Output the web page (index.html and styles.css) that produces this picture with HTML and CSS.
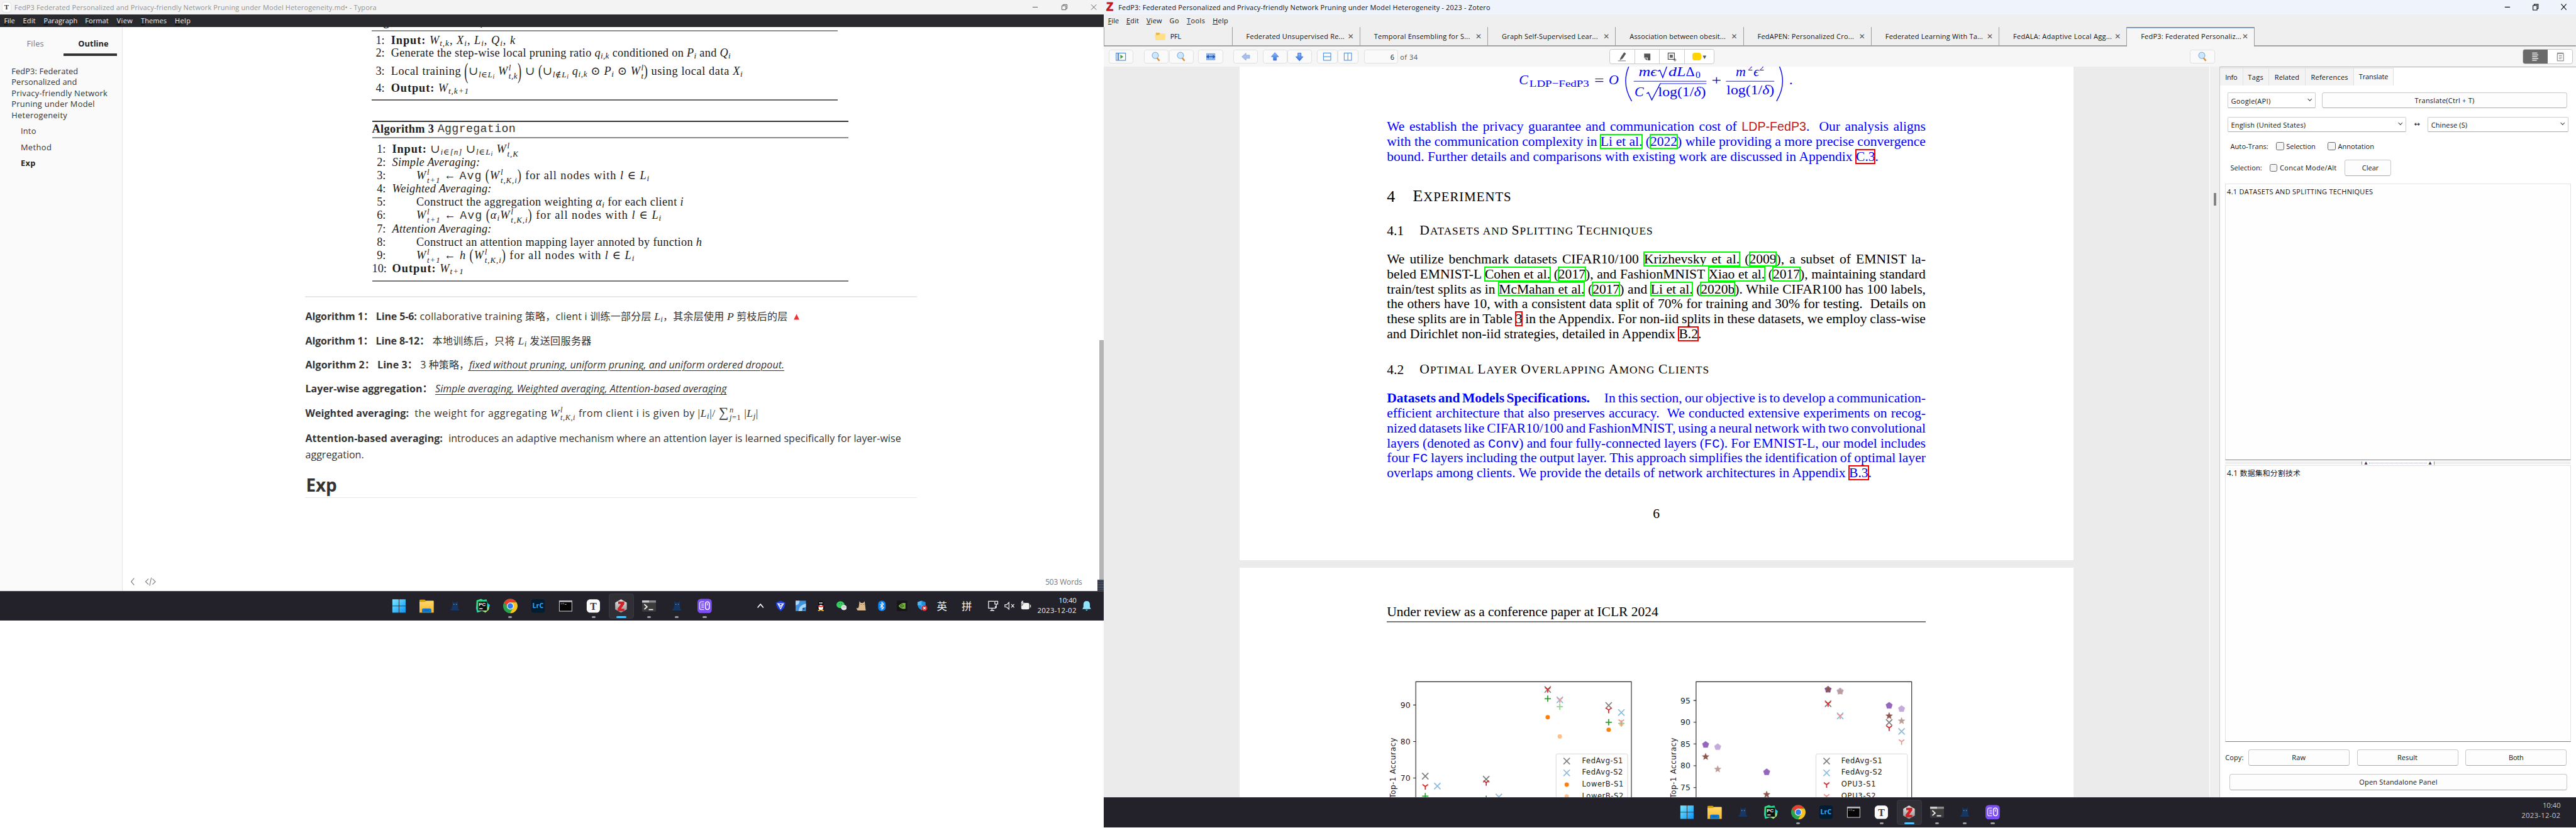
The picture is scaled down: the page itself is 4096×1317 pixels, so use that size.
FILE: index.html
```html
<!DOCTYPE html>
<html lang="en">
<head>
<meta charset="utf-8">
<title>Desktop</title>
<link rel="stylesheet" href="styles.css">
</head>
<body>
<svg width="0" height="0" class="defs">
  <defs>
    <linearGradient id="gw" x1="0" y1="0" x2="1" y2="1"><stop offset="0" stop-color="#7be8ff"/><stop offset="1" stop-color="#0a94f5"/></linearGradient>
    <linearGradient id="gf" x1="0" y1="0" x2="0" y2="1"><stop offset="0" stop-color="#ffd968"/><stop offset="1" stop-color="#f8b62c"/></linearGradient>
    <linearGradient id="gz" x1="0" y1="0" x2="0" y2="1"><stop offset="0" stop-color="#e8e8e8"/><stop offset="1" stop-color="#8d8d8d"/></linearGradient>
    <linearGradient id="gp" x1="0" y1="0" x2="1" y2="1"><stop offset="0" stop-color="#39e36f"/><stop offset=".5" stop-color="#1fd3a0"/><stop offset="1" stop-color="#f3f04b"/></linearGradient>
    <linearGradient id="ga" x1="0" y1="0" x2="0" y2="1"><stop offset="0" stop-color="#8fc0ff"/><stop offset="1" stop-color="#2f6de0"/></linearGradient>
  </defs>
  <symbol id="i-win" viewBox="0 0 26 26"><path d="M1 1h11.5v11.5H1zM13.5 1H25v11.5H13.5zM1 13.5h11.5V25H1zM13.5 13.5H25V25H13.5z" fill="url(#gw)"/></symbol>
  <symbol id="i-folder" viewBox="0 0 26 26"><path d="M0 3q0-1.500 1.500-1.500h8L12 4v4H0z" fill="#d99a0b"/><path d="M0 5.500h10l2-2h12.500q1.500 0 1.500 1.500V25H0z" fill="url(#gf)"/><path d="M4.500 25v-5q0-2.500 2.500-2.500h12q2.500 0 2.500 2.500v5z" fill="#0f78d0"/><path d="M9 20.500h8" stroke="#0a5ba6" stroke-width="1.200"/></symbol>
  <symbol id="i-cat" viewBox="0 0 26 26"><path d="M8 4l3 3h4l3-3 .5 8q-1 2 .5 5l2 4H7q-3 0-3-2 2 0 3-2l1.500-5z" fill="#173763"/><circle cx="11" cy="10" r=".8" fill="#8aa6c9"/><circle cx="15.500" cy="10" r=".8" fill="#8aa6c9"/></symbol>
  <symbol id="i-pc" viewBox="0 0 26 26"><path d="M2 3l8-3 4 2 6-1 2 7 4 3-2 9-6 5-6-3-9 3-2-8z" fill="url(#gp)"/><path d="M20 7l6 4-3 5z" fill="#16c8e8"/><path d="M5 5h16v16H5z" fill="#0b0f0b"/><text x="6" y="13.500" class="pc">PC</text><path d="M7 18h6" stroke="#fff" stroke-width="1.500"/></symbol>
  <symbol id="i-chrome" viewBox="0 0 26 26"><circle cx="13" cy="13" r="13" fill="#2ba24c"/><path d="M1.700 6.500A13 13 0 0 1 24.300 6.500H13L8 15z" fill="#e8402f"/><path d="M24.300 6.500A13 13 0 0 1 12.500 26L18.500 16 15 6.500z" fill="#fcc31e"/><circle cx="13" cy="13" r="6.300" fill="#fff"/><circle cx="13" cy="13" r="5" fill="#2f7cee"/></symbol>
  <symbol id="i-lrc" viewBox="0 0 26 26"><rect x="1" y="1" width="24" height="24" rx="4" fill="#001e33"/><text x="3" y="17" class="lrc" textLength="20" lengthAdjust="spacingAndGlyphs">LrC</text></symbol>
  <symbol id="i-cmd" viewBox="0 0 26 26"><rect x="1" y="3" width="24" height="20" fill="#b9bcc0"/><rect x="2.300" y="6" width="21.400" height="15.700" fill="#050505"/><path d="M4 9h2m1.500-.5v1m1.500-1.500l1 2m1.500 0h3" stroke="#ddd" stroke-width="1"/></symbol>
  <symbol id="i-typora" viewBox="0 0 26 26"><rect x="1" y="1" width="24" height="24" rx="6" fill="#fafafa"/><text x="13" y="19.500" text-anchor="middle" class="ty">T</text></symbol>
  <symbol id="i-zot" viewBox="0 0 26 26"><path d="M13 1l10.500 6v12L13 25 2.500 19V7z" fill="url(#gz)"/><path d="M8 5h11v4.500L13 18h6v4H7v-4.500L13 9.500H8z" fill="#d02026"/></symbol>
  <symbol id="i-term" viewBox="0 0 26 26"><rect x="0" y="3" width="26" height="20" rx="1.500" fill="#3b3b3b"/><path d="M0 3h13v4H0z" fill="#c9c9c9"/><path d="M13 3h13v4H13z" fill="#8a8a8a"/><path d="M4 10l5 4.500L4 19M12 19.500h8" stroke="#f2f2f2" stroke-width="2" fill="none"/></symbol>
  <symbol id="i-purple" viewBox="0 0 26 26"><rect width="26" height="26" rx="6" fill="#7c4ff5"/><path d="M12 5.500H7Q4 5.500 4 8.500v8q0 3 3 3h5M7 9.500h5m-5 3h5m-5 3h5" stroke="#dcd0ff" stroke-width="1.700" fill="none"/><rect x="14.500" y="5.500" width="7" height="14" rx="3.500" fill="none" stroke="#fff" stroke-width="1.700"/><path d="M18 8v4" stroke="#fff" stroke-width="1.300"/></symbol>
  <symbol id="i-lens" viewBox="0 0 20 20"><path d="M11.500 12l5 6" stroke="#d9902f" stroke-width="3"/><circle cx="8.500" cy="7.500" r="6" fill="#cfe6fb" stroke="#86b4e4" stroke-width="1.500"/></symbol>
</svg>

<div class="desktop">
  <section class="screen-left">
    <div class="typora">
      <header class="ty-title">
        <span class="ty-logo">T</span>
        <span data-fit="630">FedP3 Federated Personalized and Privacy-friendly Network Pruning under Model Heterogeneity.md• - Typora</span>
        <svg class="winctl" viewBox="0 0 126 25"><path d="M2 12.500h9M53 10h7v7h-7zM55 10V8h7v7h-2M104 8l9 9M113 8l-9 9" fill="none"/></svg>
      </header>
      <nav class="ty-menu">
        <span data-fit="19"><u>F</u>ile</span><span data-fit="22"><u>E</u>dit</span><span data-fit="59"><u>P</u>aragraph</span><span data-fit="41">F<u>o</u>rmat</span><span data-fit="28"><u>V</u>iew</span><span data-fit="45"><u>T</u>hemes</span><span data-fit="28"><u>H</u>elp</span>
      </nav>
      <div class="ty-main">
        <aside class="sidebar">
          <div class="side-tabs"><span class="st"><span data-fit="30">Files</span></span><span class="st on"><span data-fit="53">Outline</span></span></div>
          <div class="outline">
            <div class="o1"><span data-fit="116">FedP3: Federated</span><br><span data-fit="114">Personalized and</span><br><span data-fit="167">Privacy-friendly Network</span><br><span data-fit="145">Pruning under Model</span><br><span data-fit="97">Heterogeneity</span></div>
            <div class="o2"><span data-fit="27">Into</span></div>
            <div class="o2"><span data-fit="54">Method</span></div>
            <div class="o2 cur"><span data-fit="26">Exp</span></div>
          </div>
        </aside>
        <div class="doc">
          <div class="alg alg-a">
            <div class="cut"><div class="alg-t"><b data-fit="108">Algorithm 2</b><tt data-fit="136">LocalUpdate</tt></div></div>
            <div class="rows">
              <div class="r"><span class="n">1:</span><span data-fit="217"><b>Input:</b> <i>W<sub>t,k</sub></i>, <i>X<sub>i</sub></i>, <i>L<sub>i</sub></i>, <i>Q<sub>i</sub></i>, <i>k</i></span></div>
              <div class="r r-gap"><span class="n">2:</span><span data-fit="591">Generate the step-wise local pruning ratio <i>q<sub>i,k</sub></i> conditioned on <i>P<sub>i</sub></i> and <i>Q<sub>i</sub></i></span></div>
              <div class="r r-mid"><span class="n">3:</span><span data-fit="612">Local training <span class="big xl">(</span>∪<i><sub>l∈L<small>i</small></sub> W<span class="ss"><span>l</span><span>t,k</span></span></i><span class="big xl">)</span> ∪ <span class="big">(</span>∪<i><sub>l∉L<small>i</small></sub> q<sub>i,k</sub></i> ⊙ <i>P<sub>i</sub></i> ⊙ <i>W<span class="ss"><span>l</span><span>t</span></span></i><span class="big">)</span> using local data <i>X<sub>i</sub></i></span></div>
              <div class="r"><span class="n">4:</span><span data-fit="136"><b>Output:</b> <i>W<sub>t,k+1</sub></i></span></div>
            </div>
          </div>
          <div class="alg alg-b">
            <div class="alg-t"><b data-fit="108">Algorithm 3</b><tt data-fit="136">Aggregation</tt></div>
            <div class="rows">
              <div class="r"><span class="n">1:</span><span data-fit="220"><b>Input:</b> ∪<i><sub>i∈[n]</sub></i> ∪<i><sub>l∈L<small>i</small></sub></i> <i>W<span class="ss"><span>l</span><span>t,K</span></span></i></span></div>
              <div class="r"><span class="n">2:</span><i data-fit="153">Simple Averaging:</i></div>
              <div class="r in"><span class="n">3:</span><span data-fit="406"><i>W<span class="ss"><span>l</span><span>t+1</span></span></i> ← <tt>Avg</tt> <span class="big">(</span><i>W<span class="ss"><span>l</span><span>t,K,i</span></span></i><span class="big">)</span> for all nodes with <i>l</i> ∈ <i>L<sub>i</sub></i></span></div>
              <div class="r"><span class="n">4:</span><i data-fit="173">Weighted Averaging:</i></div>
              <div class="r in"><span class="n">5:</span><span data-fit="465">Construct the aggregation weighting <i>α<sub>i</sub></i> for each client <i>i</i></span></div>
              <div class="r in"><span class="n">6:</span><span data-fit="427"><i>W<span class="ss"><span>l</span><span>t+1</span></span></i> ← <tt>Avg</tt> <span class="big">(</span><i>α<sub>i</sub>W<span class="ss"><span>l</span><span>t,K,i</span></span></i><span class="big">)</span> for all nodes with <i>l</i> ∈ <i>L<sub>i</sub></i></span></div>
              <div class="r"><span class="n">7:</span><i data-fit="173">Attention Averaging:</i></div>
              <div class="r in"><span class="n">8:</span><span data-fit="497">Construct an attention mapping layer annoted by function <i>h</i></span></div>
              <div class="r in"><span class="n">9:</span><span data-fit="380"><i>W<span class="ss"><span>l</span><span>t+1</span></span></i> ← <i>h</i> <span class="big">(</span><i>W<span class="ss"><span>l</span><span>t,K,i</span></span></i><span class="big">)</span> for all nodes with <i>l</i> ∈ <i>L<sub>i</sub></i></span></div>
              <div class="r"><span class="n">10:</span><span data-fit="125"><b>Output:</b> <i>W<sub>t+1</sub></i></span></div>
            </div>
          </div>
          <hr>
          <p><b data-fit="194">Algorithm 1： Line 5-6:</b><span data-fit="640">collaborative training 策略，client i 训练一部分层 <i class="m">L<sub>i</sub></i>，其余层使用 <i class="m">P</i> 剪枝后的层</span><svg class="tri" viewBox="0 0 10 10"><path d="M5 0l4.800 9.800H.2z" fill="#f03030"/></svg></p>
          <p><b data-fit="216">Algorithm 1： Line 8-12：</b><span data-fit="277">本地训练后，只将 <i class="m">L<sub>i</sub></i> 发送回服务器</span></p>
          <p><b data-fit="195">Algorithm 2： Line 3：</b><span data-fit="85">3 种策略，</span><em data-fit="548">fixed without pruning, uniform pruning, and uniform ordered dropout.</em></p>
          <p><b data-fit="221">Layer-wise aggregation：</b><em data-fit="507">Simple averaging, Weighted averaging, Attention-based averaging</em></p>
          <p><b class="w" data-fit="180">Weighted averaging:</b><span data-fit="598">the weight for aggregating <i class="m">W<span class="ss"><span>l</span><span>t,K,i</span></span></i> from client i is given by <span class="m">|<i>L<sub>i</sub></i>|/ <span class="sum">∑</span><span class="ss"><span><i>n</i></span><span><i>j</i>=1</span></span> |<i>L<sub>j</sub></i>|</span></span></p>
          <p class="last"><b class="w" data-fit="239">Attention-based averaging:</b><span data-fit="787">introduces an adaptive mechanism where an attention layer is learned specifically for layer-wise</span><br><span data-fit="102">aggregation.</span></p>
          <h2><span data-fit="54">Exp</span></h2>
          <footer class="ty-status">
            <svg viewBox="0 0 60 20"><path d="M9 4l-5 6 5 6M34 5l-5 5 5 5M41 5l5 5-5 5M39 3l-3 14" fill="none" stroke="#777" stroke-width="1.200"/></svg>
            <span data-fit="64">503 Words</span>
          </footer>
        </div>
        <div class="ty-scroll"><div class="thumb"></div><div class="edge"></div></div>
      </div>
    </div>
    <div class="taskbar">
      <div class="apps">
        <span><svg><use href="#i-win"/></svg></span><span><svg><use href="#i-folder"/></svg></span><span><svg><use href="#i-cat"/></svg></span><span><svg><use href="#i-pc"/></svg></span><span class="run"><svg><use href="#i-chrome"/></svg></span><span><svg><use href="#i-lrc"/></svg></span><span><svg><use href="#i-cmd"/></svg></span><span class="run"><svg><use href="#i-typora"/></svg></span><span class="run act"><svg><use href="#i-zot"/></svg></span><span class="run"><svg><use href="#i-term"/></svg></span><span class="run"><svg><use href="#i-cat"/></svg></span><span class="run"><svg><use href="#i-purple"/></svg></span>
      </div>
      <div class="tray">
        <svg viewBox="0 0 18 18"><path d="M4 12l5-6 5 6" stroke="#fff" stroke-width="1.800" fill="none"/></svg>
        <svg viewBox="0 0 18 18"><path d="M9 0l8 3q1 9-8 15Q0 12 1 3z" fill="#1f3fe0"/><path d="M4 5h10L9 14zM6 6l3 4 3-4" stroke="#fff" stroke-width="1.300" fill="none"/></svg>
        <svg viewBox="0 0 18 18"><rect width="18" height="18" fill="#3f93dc"/><path d="M0 0h7Q7 7 0 8zM18 5Q6 8 5 18h6q1-6 7-7z" fill="#a9d6f7"/><circle cx="14" cy="14" r="2" fill="#154b94"/></svg>
        <svg viewBox="0 0 18 18"><ellipse cx="9" cy="6" rx="5" ry="6" fill="#111"/><ellipse cx="9" cy="12" rx="6.500" ry="5" fill="#111"/><ellipse cx="9" cy="12" rx="4" ry="4.500" fill="#fff"/><path d="M4 8q5 3 10 0v2q-5 3-10 0z" fill="#e32222"/><path d="M4 17h4m2 0h4" stroke="#f5a500" stroke-width="2"/><circle cx="7.500" cy="4" r="1.200" fill="#fff"/><circle cx="10.500" cy="4" r="1.200" fill="#fff"/></svg>
        <svg viewBox="0 0 18 18"><ellipse cx="7" cy="7" rx="7" ry="6" fill="#2fd35d"/><ellipse cx="13" cy="12" rx="5" ry="4.500" fill="#e6e6e6"/><path d="M4.500 5.500h1M8.500 5.500h1M11 11h1M14 11h1" stroke="#333" stroke-width="1.200"/></svg>
        <svg viewBox="0 0 18 18"><path d="M5 1l2.500 3h4L14 1l2 16H5Q0 18 0 12q3 3 4-2z" fill="#dcb98c"/><path d="M8 6v1m4-1v1" stroke="#333"/></svg>
        <svg viewBox="0 0 18 18"><rect x="2.500" width="13" height="18" rx="6" fill="#0a84f0"/><path d="M6 6l6 6-3 3V3l3 3-6 6" stroke="#fff" stroke-width="1.200" fill="none"/></svg>
        <svg viewBox="0 0 18 18"><rect width="18" height="18" fill="#151515"/><path d="M3 9q5-6 12-5v10q-8 1-12-5z" fill="#76b83a"/><path d="M6 9q3-4 6 0-3 4-6 0z" fill="#76b83a" stroke="#151515"/></svg>
        <svg viewBox="0 0 18 18"><path d="M8 0l7 2.500q1 10-7 14-8-4-7-14z" fill="#1c8fe0"/><path d="M8 0v8H1V2.500zM8 8h7q-1 6-7 8.500z" fill="#4cb9f2"/><circle cx="13" cy="13" r="5" fill="#d92b33"/><path d="M11 11l4 4m0-4l-4 4" stroke="#fff" stroke-width="1.300"/></svg>
        <span class="ime">英</span><span class="ime b">拼</span>
        <svg class="t1" viewBox="0 0 20 18"><path d="M12 1H2v12h12V9M5 17h7M8 13v4M13 1h5v5h-5zM15.500 6v6h-2" fill="none" stroke="#f2f2f2" stroke-width="1.400"/></svg>
        <svg class="t2" viewBox="0 0 18 18"><path d="M1 7h3l4-4v12l-4-4H1zM12 6l5 6m0-6l-5 6" fill="none" stroke="#f2f2f2" stroke-width="1.300"/></svg>
        <svg class="t3" viewBox="0 0 20 18"><rect x="2" y="4" width="14" height="11" rx="2.500" fill="#f2f2f2"/><path d="M17 7h2v5h-2zM3 0l-2 5h3L3 9l5-6H5l1-3z" fill="#f2f2f2" stroke="#232129" stroke-width=".6"/></svg>
        <div class="clock"><span data-fit="31">10:40</span><span data-fit="68">2023-12-02</span></div>
        <svg class="bell" viewBox="0 0 16 18"><path d="M8 0q6 0 6 7v4l2 4H0l2-4V7q0-7 6-7zM5.500 16h5l-2.500 2z" fill="#8fe3ff"/></svg>
      </div>
    </div>
  </section>

  <section class="screen-right">
    <header class="z-title"><span class="z-logo">Z</span><span data-fit="647">FedP3: Federated Personalized and Privacy-friendly Network Pruning under Model Heterogeneity - 2023 - Zotero</span>
      <svg class="winctl dark" viewBox="0 0 126 25"><path d="M2 12.500h9M51 9.500h7v8h-7zM53 9V7.500h7V15h-2M100 7l9 10M109 7l-9 10" fill="none"/></svg>
    </header>
    <nav class="z-menu"><span data-fit="19"><u>F</u>ile</span><span data-fit="22"><u>E</u>dit</span><span data-fit="27"><u>V</u>iew</span><span data-fit="17">Go</span><span data-fit="32"><u>T</u>ools</span><span data-fit="27"><u>H</u>elp</span></nav>
    <div class="z-tabs">
      <div class="tab first"><svg viewBox="0 0 19 14"><path d="M2 0h6l2 2h7v12H2z" fill="#e9b949"/><path d="M0 4h7l2-2h10l-1 12H2z" fill="#ffdf87"/></svg><span data-fit="19">PFL</span></div>
      <div class="tab"><span data-fit="171">Federated Unsupervised Re...</span><i class="x">✕</i></div>
      <div class="tab"><span data-fit="167">Temporal Ensembling for S...</span><i class="x">✕</i></div>
      <div class="tab"><span data-fit="167">Graph Self-Supervised Lear...</span><i class="x">✕</i></div>
      <div class="tab"><span data-fit="167">Association between obesit...</span><i class="x">✕</i></div>
      <div class="tab"><span data-fit="168">FedAPEN: Personalized Cro...</span><i class="x">✕</i></div>
      <div class="tab"><span data-fit="170">Federated Learning With Ta...</span><i class="x">✕</i></div>
      <div class="tab"><span data-fit="172">FedALA: Adaptive Local Agg...</span><i class="x">✕</i></div>
      <div class="tab on"><span data-fit="175">FedP3: Federated Personaliz...</span><i class="x">✕</i></div>
    </div>
    <div class="z-bar">
      <span class="btn"><svg viewBox="0 0 20 20"><rect x="1" y="3" width="18" height="14" fill="#fff" stroke="#5b8fd0" stroke-width="1.500"/><path d="M5 3v14" stroke="#5b8fd0" stroke-width="3"/><path d="M9 6l6 4-6 4z" fill="#3fa53c"/></svg></span>
      <span class="btn g18"><svg><use href="#i-lens"/></svg></span>
      <span class="btn g1"><svg><use href="#i-lens"/></svg></span>
      <span class="btn g8"><svg viewBox="0 0 20 20"><rect x="2" y="4" width="16" height="12" fill="#8db9f0" stroke="#6d9bdb"/><path d="M1 10l5-4v3h8V6l5 4-5 4v-3H6v3z" fill="#2459b5"/></svg></span>
      <span class="btn g18"><svg viewBox="0 0 20 20"><path d="M2 10l8-7v4h7v6h-7v4z" fill="#a9c1ea" stroke="#8ba9dc"/></svg></span>
      <span class="btn g8"><svg viewBox="0 0 20 20"><path d="M10 2l7 8h-4v7H7v-7H3z" fill="url(#ga)" stroke="#4f7fd6"/></svg></span>
      <span class="btn"><svg viewBox="0 0 20 20"><path d="M10 18l7-8h-4V3H7v7H3z" fill="url(#ga)" stroke="#2c5fc4"/></svg></span>
      <span class="btn nar g8"><svg viewBox="0 0 20 20"><path d="M3 3h14v14H3zM3 10h14" fill="#fff" stroke="#5b9be0" stroke-width="1.500"/></svg></span>
      <span class="btn nar"><svg viewBox="0 0 20 20"><path d="M3 3h14v14H3zM10 3v14" fill="#fff" stroke="#5b9be0" stroke-width="1.500"/></svg></span>
      <span class="btn pg">6</span><span class="of" data-fit="31">of 34</span>
      <span class="grp">
        <span><svg viewBox="0 0 20 20"><path d="M14 2l3 2-6 9-3 2-2 1 2-5zM2 18h15" fill="#555" stroke="#555"/></svg></span>
        <span><svg viewBox="0 0 20 20"><path d="M4 4h12v13h-5v-5H4z" fill="#555"/><path d="M4 13h6v4z" fill="#555"/></svg></span>
        <span><svg viewBox="0 0 20 20"><path d="M3 3h12v12H3z" fill="none" stroke="#555" stroke-width="1.500"/><path d="M6 6h6v6H6z" fill="#666"/><path d="M16 13v6m-3-3h6" stroke="#555" stroke-width="1.300"/></svg></span>
        <span class="col"><i></i>▾</span>
      </span>
      <span class="btn find"><svg><use href="#i-lens"/></svg></span>
      <span class="seg"><span class="d"><svg viewBox="0 0 20 20"><path d="M4 3h10M4 6.500h12M4 10h10M4 13.500h12M4 17h9" stroke="#fff" stroke-width="1.500"/></svg></span><span><svg viewBox="0 0 20 20"><path d="M4 4h12v14H4z" fill="#fff" stroke="#777" stroke-width="1.200"/><path d="M4 2.800h12" stroke="#777" stroke-width="2" stroke-dasharray="1.500 1"/><path d="M7 8h6M7 11h6M7 14h5" stroke="#888" stroke-width="1.200"/></svg></span></span>
    </div>
    <div class="z-body">
      <div class="viewer">
        <article class="page p1">
          <svg class="formula" viewBox="2412 116 937 66">
            <g class="fm">
              <text x="2642" y="147" class="it">C</text><text x="2660" y="151.500" class="s" textLength="104" lengthAdjust="spacingAndGlyphs">LDP−FedP3</text>
              <text x="2773" y="148" textLength="17" lengthAdjust="spacingAndGlyphs">=</text><text x="2798" y="147" class="it" textLength="18">O</text>
              <path d="M2838 106q-21 35 0 70M3090 106q21 35 0 70" class="ln"/>
              <path d="M2841.500 141.500h126.500M3002 141.500h84M2888 145.500h80" class="hl"/>
              <text x="2850" y="132" class="it" textLength="32" lengthAdjust="spacingAndGlyphs">mϵ</text>
              <path d="M2884 124l3-2 5 13 10-27M2864 163l3-2 6 13 15-29" class="ln"/>
              <path d="M2902 108h17" class="hl"/>
              <text x="2902" y="132" class="it" textLength="30" lengthAdjust="spacingAndGlyphs">dL</text><text x="2932" y="132" textLength="17">Δ</text><text x="2949" y="135.500" class="s">0</text>
              <text x="2843" y="167" class="it" textLength="17">C</text><text x="2884" y="167" textLength="83" lengthAdjust="spacingAndGlyphs">log(1/<tspan class="it">δ</tspan>)</text>
              <text x="2977" y="148" textLength="17" lengthAdjust="spacingAndGlyphs">+</text>
              <text x="3019" y="132" class="it">m</text><text x="3040" y="123" class="s">2</text><text x="3050" y="132" class="it">ϵ</text><text x="3060" y="123" class="s">2</text>
              <text x="3003" y="164" textLength="83" lengthAdjust="spacingAndGlyphs">log(1/<tspan class="it">δ</tspan>)</text>
              <text x="3112" y="147">.</text>
            </g>
          </svg>
          <div class="para blue g26">
            <div class="line" data-by="word" data-fit="937">We establish the privacy guarantee and communication cost of <span class="ldp">LDP-FedP3</span>.&nbsp; Our analysis aligns</div>
            <div class="line" data-by="word" data-fit="937">with the communication complexity in <a class="c">Li et al.</a> (<a class="c">2022</a>) while providing a more precise convergence</div>
            <div class="line" data-by="word" data-fit="855">bound. Further details and comparisons with existing work are discussed in Appendix <a class="c red">C.3</a>.</div>
          </div>
          <h3><span class="num">4</span><span class="sc" data-fit="172"><span>E</span>XPERIMENTS</span></h3>
          <h4 class="g30"><span class="num">4.1</span><span class="sc" data-fit="406"><span>D</span>ATASETS AND <span>S</span>PLITTING <span>T</span>ECHNIQUES</span></h4>
          <div class="para">
            <div class="line" data-by="word" data-fit="937">We utilize benchmark datasets CIFAR10/100 <a class="c">Krizhevsky et al.</a> (<a class="c">2009</a>), a subset of EMNIST la-</div>
            <div class="line" data-by="word" data-fit="937">beled EMNIST-L <a class="c">Cohen et al.</a> (<a class="c">2017</a>), and FashionMNIST <a class="c">Xiao et al.</a> (<a class="c">2017</a>), maintaining standard</div>
            <div class="line" data-by="word" data-fit="937">train/test splits as in <a class="c">McMahan et al.</a> (<a class="c">2017</a>) and <a class="c">Li et al.</a> (<a class="c">2020b</a>). While CIFAR100 has 100 labels,</div>
            <div class="line" data-by="word" data-fit="937">the others have 10, with a consistent data split of 70% for training and 30% for testing.&nbsp; Details on</div>
            <div class="line" data-by="word" data-fit="937">these splits are in Table <a class="c red">3</a> in the Appendix. For non-iid splits in these datasets, we employ class-wise</div>
            <div class="line" data-by="word" data-fit="547">and Dirichlet non-iid strategies, detailed in Appendix <a class="c red">B.2</a>.</div>
          </div>
          <h4 class="g36"><span class="num">4.2</span><span class="sc" data-fit="504"><span>O</span>PTIMAL <span>L</span>AYER <span>O</span>VERLAPPING <span>A</span>MONG <span>C</span>LIENTS</span></h4>
          <div class="para blue">
            <div class="line two"><b data-fit="353" data-by="word">Datasets and Models Specifications.</b><span data-fit="559" data-by="word">In this section, our objective is to develop a communication-</span></div>
            <div class="line" data-by="word" data-fit="937">efficient architecture that also preserves accuracy.&nbsp; We conducted extensive experiments on recog-</div>
            <div class="line" data-by="word" data-fit="937">nized datasets like CIFAR10/100 and FashionMNIST, using a neural network with two convolutional</div>
            <div class="line" data-by="word" data-fit="937">layers (denoted as <tt>Conv</tt>) and four fully-connected layers (<tt>FC</tt>). For EMNIST-L, our model includes</div>
            <div class="line" data-by="word" data-fit="937">four <tt>FC</tt> layers including the output layer. This approach simplifies the identification of optimal layer</div>
            <div class="line" data-by="word" data-fit="843">overlaps among clients. We provide the details of network architectures in Appendix <a class="c red">B.3</a>.</div>
          </div>
          <div class="folio">6</div>
        </article>
        <article class="page p2">
          <div class="runhead"><span data-fit="472" data-by="word">Under review as a conference paper at ICLR 2024</span></div>
          <svg class="plots" viewBox="2412 1150 937 237">
            <g class="axes"><path d="M2462.500 1390V1186.500H2837.500V1390M2458 1227h4M2458 1290.500h4M2458 1354h4M2950 1390V1186.500H3325V1390M2945.500 1219h4M2945.500 1257h4M2945.500 1294.700h4M2945.500 1332.600h4M2945.500 1370.600h4"/></g>
            <g class="tk"><text x="2453" y="1232">90</text><text x="2453" y="1295.500">80</text><text x="2453" y="1359">70</text><text x="2940" y="1224">95</text><text x="2940" y="1262">90</text><text x="2940" y="1299.700">85</text><text x="2940" y="1337.600">80</text><text x="2940" y="1375.600">75</text></g>
            <g class="yl"><text transform="translate(2427 1389) rotate(-90)" textLength="105">Top-1 Accuracy</text><text transform="translate(2915 1389) rotate(-90)" textLength="105">Top-1 Accuracy</text></g>
            <g id="marks"></g>
            <rect x="2706.500" y="1312" width="124.500" height="90" rx="3" class="lg"/><rect x="3158.500" y="1312" width="159" height="90" rx="3" class="lg"/>
            <g id="legend-marks"></g>
            <g class="lt"><text x="2751.600" y="1328" textLength="71">FedAvg-S1</text><text x="2751.600" y="1348.400" textLength="71">FedAvg-S2</text><text x="2751.600" y="1369" textLength="72">LowerB-S1</text><text x="2751.600" y="1389.300" textLength="72">LowerB-S2</text><text x="3202.600" y="1328" textLength="71">FedAvg-S1</text><text x="3202.600" y="1348.400" textLength="71">FedAvg-S2</text><text x="3202.600" y="1369" textLength="60">OPU3-S1</text><text x="3202.600" y="1389.300" textLength="60">OPU3-S2</text></g>
          </svg>
        </article>
      </div>
      <div class="v-scroll"><div></div></div>
      <aside class="pane">
        <div class="p-tabs"><span class="a"><span data-fit="21">Info</span></span><span class="b"><span data-fit="27">Tags</span></span><span class="cc"><span data-fit="43">Related</span></span><span class="dd"><span data-fit="65">References</span></span><span class="e"><span data-fit="51">Translate</span></span></div>
        <div class="row r1"><span class="sel s1"><span data-fit="69">Google(API)</span><i></i></span><span class="pb tr"><span data-fit="104">Translate(Ctrl + T)</span></span></div>
        <div class="row r2"><span class="sel s2"><span data-fit="130">English (United States)</span><i></i></span><span class="lr">↔</span><span class="sel s3"><span data-fit="63">Chinese (S)</span><i></i></span></div>
        <div class="row r3"><span data-fit="66">Auto-Trans:</span><i class="cb"></i><span data-fit="51">Selection</span><i class="cb c2"></i><span data-fit="63">Annotation</span></div>
        <div class="row r4"><span data-fit="55">Selection:</span><i class="cb"></i><span data-fit="99">Concat Mode/Alt</span><span class="pb clr"><span data-fit="29">Clear</span></span></div>
        <div class="ta ta1"><span data-fit="254">4.1 DATASETS AND SPLITTING TECHNIQUES</span></div>
        <div class="split"><span><i>▲</i><b></b><i>▲</i></span></div>
        <div class="ta ta2"><span data-fit="128">4.1 数据集和分割技术</span></div>
        <div class="row r5"><span data-fit="32">Copy:</span><span class="pb"><span data-fit="24">Raw</span></span><span class="pb"><span data-fit="35">Result</span></span><span class="pb"><span data-fit="26">Both</span></span></div>
        <div class="row r6"><span class="pb"><span data-fit="136">Open Standalone Panel</span></span></div>
      </aside>
    </div>
    <div class="taskbar">
      <div class="apps">
        <span><svg><use href="#i-win"/></svg></span><span><svg><use href="#i-folder"/></svg></span><span><svg><use href="#i-cat"/></svg></span><span><svg><use href="#i-pc"/></svg></span><span class="run"><svg><use href="#i-chrome"/></svg></span><span><svg><use href="#i-lrc"/></svg></span><span><svg><use href="#i-cmd"/></svg></span><span class="run"><svg><use href="#i-typora"/></svg></span><span class="run act"><svg><use href="#i-zot"/></svg></span><span class="run"><svg><use href="#i-term"/></svg></span><span class="run"><svg><use href="#i-cat"/></svg></span><span class="run"><svg><use href="#i-purple"/></svg></span>
      </div>
      <div class="clock"><span data-fit="31">10:40</span><span data-fit="68">2023-12-02</span></div>
    </div>
  </section>
</div>
<script src="app.js"></script>
</body>
</html>
```
FILE: styles.css
```css
*{box-sizing:border-box}
html,body{margin:0;padding:0;overflow:hidden;background:#fff}
i,em{font-style:normal}
svg{display:block}
.defs{position:absolute}
.desktop{width:4480px;height:1440px;zoom:.9142857;display:grid;grid-template-columns:1920px 2560px;background:#fff;font:12px "Open Sans","Noto Sans CJK SC",sans-serif;color:#111}
[data-fit]{display:inline-block;white-space:nowrap}
.pc{font:bold 9px "Liberation Sans",sans-serif;fill:#fff}
.lrc{font:bold 12px "Open Sans",sans-serif;fill:#35a6ff}
.ty{font:bold 18px "Liberation Serif",serif;fill:#333}

/* left screen: editor */
.screen-left{height:1080px;display:flex;flex-direction:column;overflow:hidden}
.typora{height:1028px;display:flex;flex-direction:column;background:#fff}
.ty-title{height:25px;background:#f3f3f3;color:#939393;display:flex;align-items:center;padding-left:4px;gap:6px;flex:none}
.ty-logo{width:15px;height:17px;border-radius:4px;background:#fff;box-shadow:0 0 2px #bbb;font:bold 12px/17px "Liberation Serif",serif;color:#333;text-align:center}
.winctl{width:126px;height:25px;margin-left:auto;stroke:#555;stroke-width:1}
.winctl.dark{stroke:#111;stroke-width:1.200}
.ty-menu{height:22px;background:#292a2d;color:#f2f2f2;display:flex;line-height:21px;padding-left:7px;flex:none}
.ty-menu>span{margin-right:14px}
.ty-menu u{text-decoration-color:#000;text-underline-offset:2px}
.ty-menu>span:nth-child(4){margin-left:-1px}
.ty-main{flex:1;display:flex;min-height:0}
.sidebar{width:213px;background:#fafafa;border-right:1px solid #e6e6e6;font-size:14px;color:#333}
.side-tabs{display:flex;height:50px;padding:17px 9px 0 17px;color:#777}
.st{width:93px;text-align:center;line-height:26px;height:33px;padding-right:4px}
.st.on{font-weight:bold;color:#222;border-bottom:4.400px solid #333;padding-right:0;padding-left:12px}
.outline{padding:18px 0 0 20px;line-height:19px}
.o2{padding:9px 0 0 16px;line-height:19px}
.cur{font-weight:bold;color:#222}
.doc{width:1699px;padding-left:318px;display:flex;flex-direction:column;color:#333;overflow:hidden}
.alg{font:20px "Liberation Serif","DejaVu Serif",serif;color:#1a1a1a;margin-left:115px}
.alg i,.m i,i.m{font-style:italic}
.alg sub,.m sub{font-size:.72em;line-height:0;vertical-align:-.25em}
.alg sub small{font-size:.75em;vertical-align:-.2em;line-height:0}
.alg tt{font-family:"Liberation Mono",monospace;color:#333}
.alg-t{display:flex;gap:6px;line-height:25px}
.alg-a{width:811px}
.cut{height:6px;overflow:hidden}
.cut .alg-t{margin-top:-21px}
.alg-a .rows{border-top:2.200px solid #8c8c8c;border-bottom:2.200px solid #666;padding-top:4px;height:122px}
.alg-a .n{width:23px}
.r{display:flex;line-height:23px;height:23.100px}
.alg-a .r{height:22px}
.alg-a .r-gap{height:32px}
.alg-a .r-mid{height:29px}
.n{width:24px;flex:none;text-align:right;margin-right:11px}
.in .n{margin-right:53px}
.alg-b{margin-left:116px;width:828px;margin-top:35px;border-top:2.200px solid #333;border-bottom:2.200px solid #777}
.alg-b .alg-t{border-bottom:2.200px solid #888;height:28px}
.alg-b .rows{padding-top:8px;height:248px}
.ss{display:inline-flex;flex-direction:column;font-size:.7em;line-height:1em;vertical-align:.55em;margin:-.6em 0 -.8em 1px}
.big{display:inline-block;line-height:1;transform:scaleY(1.35)}
.xl{transform:scaleY(2)}
.m{font-family:"Liberation Serif",serif;font-size:1.100em;line-height:1}
.sum{font-size:1.250em;line-height:0}
hr{width:1064px;height:2px;border:0;background:#e7e7e7;margin:25px 0 20px;flex:none}
.doc p{margin:0 0 14px;font-size:17.500px;line-height:28px;height:28px;flex:none;white-space:nowrap}
.doc p>*{vertical-align:baseline}
.doc p>b{margin-right:5px}
.doc p>b.w{margin-right:10px}
.doc p em{font-style:italic;text-decoration:underline;text-underline-offset:3px;text-decoration-thickness:1px}
.doc p.last{height:56px;margin-top:2px}
.tri{display:inline-block;width:10px;height:11px;margin-left:10px}
.doc h2{margin:4px 0 0;width:1064px;height:43px;border-bottom:1px solid #e8e8e8;font-size:30.600px;line-height:41px;padding-left:1px;flex:none}
.ty-status{margin:auto 30px 4px -300px;height:24px;display:flex;justify-content:space-between;align-items:center;font-size:13px;color:#777;flex:none;padding-left:0}
.ty-status svg{width:60px;height:20px;margin-left:-7px}
.ty-scroll{width:8px;padding-top:545px}
.thumb{height:417px;background:#b4b4b4}
.edge{height:19px;margin-left:-3px;background:repeating-linear-gradient(#454d5e 0 2px,#343a48 2px 4px)}

/* taskbars */
.taskbar{height:52px;flex:none;background:#232129;border-top:1px solid #48474d;display:flex;color:#f2f2f2}
.apps{display:flex;margin-left:670px}
.screen-right .apps{margin-left:990px}
.apps>span{width:48.300px;display:flex;flex-direction:column;align-items:center;padding-top:12px;height:51px}
.apps svg{width:25px;height:26px}
.run::after{content:"";width:7px;height:3px;border-radius:2px;background:#9b9b9f;margin-top:5px}
.act{background:#302f36;border-radius:5px;width:43px!important;margin:3px 2.650px 0;height:44px!important;padding-top:9px!important;box-shadow:inset 0 0 0 1px #3a3940}
.act::after{width:18px;background:#4cc2ff}
.tray{display:flex;align-items:center;margin-left:64px;height:49px}
.tray>svg{width:18px;height:19px;margin-right:17.200px}
.ime{font-size:18px;width:18px;margin:0 0 0 -1px}
.ime.b{margin-left:25px}
.tray .t1{width:20px;margin:0 0 0 0}
.tray .t2{margin:0 10px 0 9px}
.tray .t3{width:20px;margin:0}
.clock{display:flex;flex-direction:column;align-items:flex-end;font-size:12.500px;line-height:18px;margin-left:10px;padding-top:0}
.tray .bell{width:15px;margin:0 0 0 10px}
.screen-right .clock{margin:4px 27px 0 auto;color:#c9c9cc}

/* right screen: reference manager */
.screen-right{height:1440px;display:flex;flex-direction:column;overflow:hidden;background:#efefef}
.z-title{height:25px;flex:none;background:#eff3fb;display:flex;align-items:center;padding-left:4px}
.z-logo{width:14px;margin-right:7px;font:bold 20px/20px "Liberation Sans",sans-serif;color:#c4161c;-webkit-text-stroke:1px #c4161c}
.z-menu{height:22px;flex:none;background:#efefef;display:flex;line-height:22px;padding-left:7px}
.z-menu>span{margin-right:13px}
.z-tabs{height:34px;flex:none;display:flex;background:linear-gradient(#9e9e9e,#9e9e9e) bottom/100% 2px no-repeat #efefef}
.tab{width:222.300px;border-left:1px solid #9c9c9c;display:flex;padding-left:24px;align-items:center;height:33px;line-height:33px}
.tab .x{margin-left:auto;margin-right:10px;font:bold 13px "DejaVu Sans",sans-serif;color:#555}
.tab.first{padding-left:87px;gap:8px}
.tab.first svg{width:19px;height:14px}
.tab.on{height:34px;border-right:1px solid #9c9c9c;background:#f6f6f6;box-shadow:inset 0 2px #6489c6;width:223px}
.z-bar{height:35px;flex:none;background:#f6f6f6;display:flex;align-items:center;padding-left:8px}
.btn{width:43px;height:25px;border:1px solid #e0e0e0;border-radius:4px;background:#fafafa;display:flex;align-items:center;justify-content:center;flex:none}
.btn svg,.grp svg,.seg svg{width:18px;height:18px}
.g18{margin-left:18px}.g1{margin-left:1px}.g8{margin-left:8px}
.nar{width:36.500px}
.pg{width:59px;margin-left:9px;justify-content:flex-end;padding-right:5px}
.of{margin-left:4px;color:#555}
.grp{margin-left:333px;width:183px;height:27px;border:1px solid #c9c9c9;border-radius:4px;background:#fff;display:flex;flex:none}
.grp>span{width:43.500px;border-right:1px solid #ccc;display:flex;align-items:center;justify-content:center}
.grp>.col{width:51px;border:0;color:#555;gap:3px;font-family:"DejaVu Sans",sans-serif}
.col i{width:15px;height:13px;border-radius:4px;background:#ffd400}
.find{margin-left:827px}
.seg{margin-left:auto;margin-right:5px;width:88px;height:27px;border:1px solid #c4c4c4;border-radius:4px;display:flex;background:#fff;overflow:hidden}
.seg>span{flex:1;display:flex;align-items:center;justify-content:center}
.seg .d{background:#6a6a6a}
.z-body{height:1271px;flex:none;display:flex}
.viewer{width:1922px;background:#ebebeb;overflow:hidden}
.page{width:1450px;margin-left:236px;background:#fff;padding:0 257px 0 256px;font:23.600px/26.070px "Liberation Serif",serif;color:#000}
.p1{height:859px}
.formula{width:937px;height:66px}
.fm{fill:#00f;font:italic 24px "Liberation Serif","DejaVu Serif",serif}
.fm text{font-style:normal}
.fm .it{font-style:italic}
.fm .s{font-size:17px}
.ln{fill:none;stroke:#00f;stroke-width:1.500}
.hl{fill:none;stroke:#22f;stroke-width:1.200}
.line{display:block;width:max-content;white-space:nowrap;height:26.070px}
.line.two{display:flex;gap:25px}
.blue{color:#00f}
.g26{margin-top:26.300px}
.ldp{font-family:"Liberation Sans",sans-serif;color:#c01818;font-size:21.500px;line-height:0}
.line tt{font-family:"Liberation Mono",monospace;font-size:22.500px;line-height:0}
.c{position:relative}
.c::after{content:"";position:absolute;left:-1px;right:-1px;top:0;height:21.600px;border:2.200px solid #0f0}
.c.red::after{border-color:#f00}
.page h3,.page h4{margin:0;font-weight:normal;font-size:23.600px;line-height:26px;display:flex}
.page h3{font-size:28.400px;line-height:34px;margin-top:38.700px}
.page h3 .num{width:45px}
.page h4 .num{width:57px}
.sc{font-size:.8em}
.sc span{font-size:1.250em;line-height:0}
.g30{margin-top:30px!important}
.g36{margin-top:36px!important}
h4+.para{margin-top:23.500px}
.folio{margin-top:44.500px;text-align:center}
.p2{margin-top:12.700px;height:420px;padding-top:64px}
.runhead{height:31px;border-bottom:2.200px solid #777}
.plots{width:937px;height:237px;margin-top:67px}
.axes{fill:none;stroke:#222;stroke-width:1.200}
.tk{font:13.500px "DejaVu Sans",sans-serif;text-anchor:end;fill:#222}
.yl{font:13px "DejaVu Sans",sans-serif;fill:#222}
.lt{font:12.600px "DejaVu Sans",sans-serif;fill:#222}
.lg{fill:#fff;stroke:#d4d4d4}
.v-scroll{width:19px;background:#efefef;border-left:1px solid #fff;border-right:1px solid #c8c8c8;padding:220px 5px 0 7px}
.v-scroll div{height:22px;width:4px;background:#858585}
.pane{flex:1;background:#fff;border-top:1px solid #aaa;display:flex;flex-direction:column}
.p-tabs{height:31px;margin-top:1px;display:flex;line-height:30px;text-align:center;border-top:1px solid #e4e4e4;width:302px}
.p-tabs>span{background:#f3f3f3;border-right:1px solid #e0e0e0;height:30px}
.a{width:40px}.b{width:45px}.cc{width:64px}.dd{width:84px}
.p-tabs .e{width:69px;background:#fafafa;line-height:28px}
.row{display:flex;align-items:center;flex:none}
.sel{height:27px;border:1px solid #ccc;border-bottom-color:#aaa;border-radius:2px;display:flex;align-items:center;justify-content:space-between;padding:2px 6px 0 5px}
.sel i{width:6px;height:6px;border-right:1px solid #444;border-bottom:1px solid #444;transform:rotate(45deg);margin-top:-7px}
.pb{height:28px;border:1px solid #c8c8c8;border-bottom-color:#aaa;border-radius:4px;background:#fdfdfd;display:flex;align-items:center;justify-content:center}
.r1{margin:11px 0 0 13px;height:29px;gap:11px}
.s1{width:153px}.tr{width:427px}
.r2{margin:14px 0 0 13px;height:27px}
.s2{width:311px}.s3{width:245px}
.lr{width:37px;text-align:center;font-family:"DejaVu Sans",sans-serif}
.r3{margin:15px 0 0 18px;height:18px}
.cb{width:14px;height:14px;border:1px solid #666;border-radius:3px;background:#f5f5f5;margin:0 4px 0 13px}
.c2{margin-left:21px}
.r4{margin:15px 0 0 18px;height:28px}
.clr{width:81px;margin-left:14px;padding-left:8px}
.ta{margin-left:9px;width:601px;border:1px solid #e2e2e2;border-bottom-color:#808080;background:#fefefe;padding:3px 2px;flex:none}
.ta1{margin-top:13px;height:482px;padding-top:5px}
.ta2{height:482px;font-size:13px}
.split{height:8px;margin-left:9px;width:601px;flex:none;padding:2px 0 1px;display:flex;justify-content:center;background:linear-gradient(#efefef,#efefef) center/100% 5px no-repeat}
.split span{width:127px;border:1px solid #888;border-width:0 1px;background:#fff;display:flex;align-items:center;justify-content:space-between;padding:0 4px}
.split i{font:7px/5px "DejaVu Sans",sans-serif;color:#335}
.split b{width:100px;border-top:2px dotted #99a}
.r5{margin:13px 0 0 9px;height:28px}
.r5>.pb{width:176px;margin-left:13px}
.r5>.pb:nth-child(2){margin-left:8px}
.r6{margin:14px 0 0 16px}
.r6 .pb{width:588px;height:29px}
```
FILE: app.js
```js
// Markers of the two accuracy plots: [shape, colour, x, y]
const GREY = '#7f7f7f', BLUE = '#8fbbdb', RED = '#d62728', PINK = '#ea9394';
const GREEN = '#2ca02c', LGREEN = '#95cf95', ORANGE = '#ff7f0e', LORANGE = '#ffbf86';
const PURPLE = '#9467bd', LPURPLE = '#c3abda', BROWN = '#8c564b', LBROWN = '#bd9c96';
const marks = [
  ['x', GREY, 2479, 1350.7], ['y', RED, 2479, 1368.7], ['x', BLUE, 2500, 1368], ['+', GREEN, 2479, 1385.6],
  ['x', GREY, 2585, 1356], ['y', RED, 2585, 1362], ['x', BLUE, 2607, 1387], ['+', GREEN, 2585, 1390],
  ['x', GREY, 2692, 1200], ['y', RED, 2692, 1200], ['+', GREEN, 2692, 1216], ['x', BLUE, 2713, 1218], ['y', PINK, 2713, 1218],
  ['+', LGREEN, 2713, 1230], ['o', ORANGE, 2692, 1248.3], ['o', LORANGE, 2713, 1281.7],
  ['x', GREY, 2798, 1227.7], ['y', RED, 2798, 1235.7], ['x', BLUE, 2820, 1240], ['+', GREEN, 2798, 1257],
  ['o', LORANGE, 2820, 1260], ['+', LGREEN, 2820, 1259], ['y', PINK, 2820, 1256], ['o', ORANGE, 2798, 1270],
  ['p', PURPLE, 2966.6, 1296], ['p', LPURPLE, 2987.6, 1300], ['s', BROWN, 2966.6, 1317], ['s', LBROWN, 2987.6, 1338.7],
  ['p', PURPLE, 3072.8, 1343.7], ['s', BROWN, 3072.8, 1382.7], ['p', PURPLE, 3179.6, 1200], ['s', BROWN, 3179.6, 1200],
  ['p', LPURPLE, 3200.6, 1203], ['s', LBROWN, 3200.6, 1203.5], ['x', GREY, 3179.6, 1224.7], ['y', RED, 3179.6, 1224.7],
  ['x', BLUE, 3200.6, 1246], ['y', PINK, 3200.6, 1246], ['p', PURPLE, 3285.8, 1228], ['p', LPURPLE, 3307.4, 1233.7],
  ['s', BROWN, 3285.8, 1246], ['x', GREY, 3285.8, 1257.3], ['s', LBROWN, 3307.4, 1254.7], ['y', RED, 3285.8, 1266.7],
  ['x', BLUE, 3307.4, 1273], ['y', PINK, 3307.4, 1290.7],
];
const legend = [
  ['x', GREY, 2725, 1324.5], ['x', BLUE, 2725, 1345], ['o', ORANGE, 2725, 1365.5], ['o', LORANGE, 2725, 1386],
  ['x', GREY, 3177, 1324.5], ['x', BLUE, 3177, 1345], ['y', RED, 3177, 1365.5], ['y', PINK, 3177, 1386],
];
const poly = (n, R, r) => {
  let d = '';
  for (let i = 0; i < n; i++) {
    const a = -Math.PI / 2 + i * 2 * Math.PI / n, q = i % 2 ? r : R;
    d += (i ? 'L' : 'M') + (q * Math.cos(a)).toFixed(2) + ' ' + (q * Math.sin(a)).toFixed(2);
  }
  return d + 'z';
};
const shapes = {
  x: ['M-5.500-5.500L5.500 5.500M5.500-5.500L-5.500 5.500', 0], y: ['M0 0V5.500M0 0L-4.800-3.500M0 0L4.800-3.500', 0], '+': ['M-5.500 0H5.500M0-5.500V5.500', 0],
  o: ['M-3.600 0a3.600 3.600 0 1 0 7.200 0a3.600 3.600 0 1 0-7.200 0', 1], p: [poly(5, 6, 6), 1], s: [poly(10, 6.2, 2.7), 1],
};
const draw = (list, id) => {
  document.getElementById(id).innerHTML = list.map(([s, c, x, y]) =>
    `<path d="${shapes[s][0]}" transform="translate(${x} ${y})" fill="${shapes[s][1] ? c : 'none'}" stroke="${c}" stroke-width="${shapes[s][1] ? 0.5 : 1.9}"/>`).join('');
};
draw(marks, 'marks');
draw(legend, 'legend-marks');

const unit = document.querySelector('.desktop').getBoundingClientRect().width / 4480;
for (const el of document.querySelectorAll('[data-fit]')) {
  const prop = el.dataset.by === 'word' ? 'wordSpacing' : 'letterSpacing';
  const width = () => el.getBoundingClientRect().width;
  const w0 = width();
  el.style[prop] = '1px';
  const w1 = width();
  el.style[prop] = ((el.dataset.fit * unit - w0) / (w1 - w0)).toFixed(3) + 'px';
}
```
